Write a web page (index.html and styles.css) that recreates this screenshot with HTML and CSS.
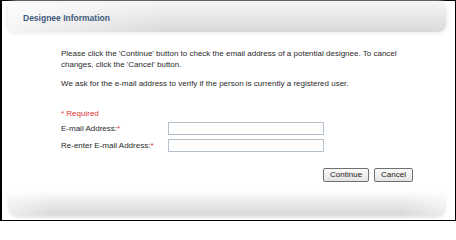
FILE: index.html
```html
<!DOCTYPE html>
<html>
<head>
<meta charset="utf-8">
<link rel="stylesheet" href="styles.css">
</head>
<body>
<div class="frame">
  <div class="header"><span class="title">Designee Information</span></div>
  <div class="content">
    <p class="para">Please click the 'Continue' button to check the email address of a potential designee. To cancel changes, click the 'Cancel' button.</p>
    <p class="para second">We ask for the e-mail address to verify if the person is currently a registered user.</p>
    <div class="required">* Required</div>
    <div class="form">
      <div class="row">
        <label class="label">E-mail Address:<span class="star">*</span></label>
        <input class="field" type="text">
      </div>
      <div class="row">
        <label class="label">Re-enter E-mail Address:<span class="star">*</span></label>
        <input class="field" type="text">
      </div>
    </div>
  </div>
  <div class="actions">
    <button class="btn">Continue</button>
    <button class="btn">Cancel</button>
  </div>
  <div class="footer"></div>
</div>
</body>
</html>
```
FILE: styles.css
```css
html, body {
  margin: 0;
  padding: 0;
  background: #fff;
}
.frame {
  box-sizing: border-box;
  width: 456px;
  height: 221px;
  border: 1px solid #000;
  border-left-width: 2px;
  display: flex;
  flex-direction: column;
  font-family: "Liberation Sans", Arial, sans-serif;
  font-size: 8px;
  color: #2a2a2a;
}
.header {
  margin: 2px 9px 0 6px;
  height: 29px;
  border-radius: 8px;
  padding-left: 15px;
  display: flex;
  align-items: center;
  background:
    linear-gradient(to right, rgba(255,255,255,0.75), rgba(255,255,255,0) 35%),
    linear-gradient(to bottom, #f4f4f4 0%, #e6e6e6 55%, #d9d9d9 100%);
  box-shadow: 0 0 4px 2px #f0f0f0;
}
.title {
  font-family: "Liberation Sans", Arial, sans-serif;
  font-weight: bold;
  font-size: 8.5px;
  color: #3d5a7c;
}
.content {
  padding: 16px 0 0 59px;
}
.para {
  margin: 0;
  width: 360px;
  line-height: 11px;
}
.second {
  margin-top: 8px;
}
.required {
  color: #e03030;
  margin-top: 19px;
  line-height: 11px;
}
.form {
  margin-top: 3px;
  display: flex;
  flex-direction: column;
  gap: 4px;
}
.row {
  display: flex;
  align-items: center;
  height: 13px;
}
.label {
  width: 107px;
}
.star {
  color: #e03030;
}
.field {
  box-sizing: border-box;
  width: 156px;
  height: 13px;
  margin: 0;
  padding: 0;
  border: 1px solid #b4c0cc;
  background: #fff;
}
.actions {
  display: flex;
  justify-content: flex-end;
  gap: 5px;
  padding-right: 42px;
  margin-top: 16px;
}
.btn {
  box-sizing: border-box;
  height: 14px;
  padding: 0 6px;
  font-family: "Liberation Sans", Arial, sans-serif;
  font-size: 8px;
  color: #222;
  border: 1px solid #6f6f6f;
  border-radius: 2px;
  background: linear-gradient(to bottom, #fafafa, #e4e4e4);
  line-height: 12px;
}
.footer {
  margin: auto 9px 3px 6px;
  height: 26px;
  border-radius: 0 0 10px 10px;
  background:
    linear-gradient(to right, rgba(255,255,255,0.5), rgba(255,255,255,0) 10%, rgba(255,255,255,0) 90%, rgba(255,255,255,0.5)),
    linear-gradient(to bottom, #ffffff 0%, #ececec 40%, #dadada 90%, #e8e8e8 100%);
  box-shadow: 0 1px 2px #e6e6e6;
}
```
